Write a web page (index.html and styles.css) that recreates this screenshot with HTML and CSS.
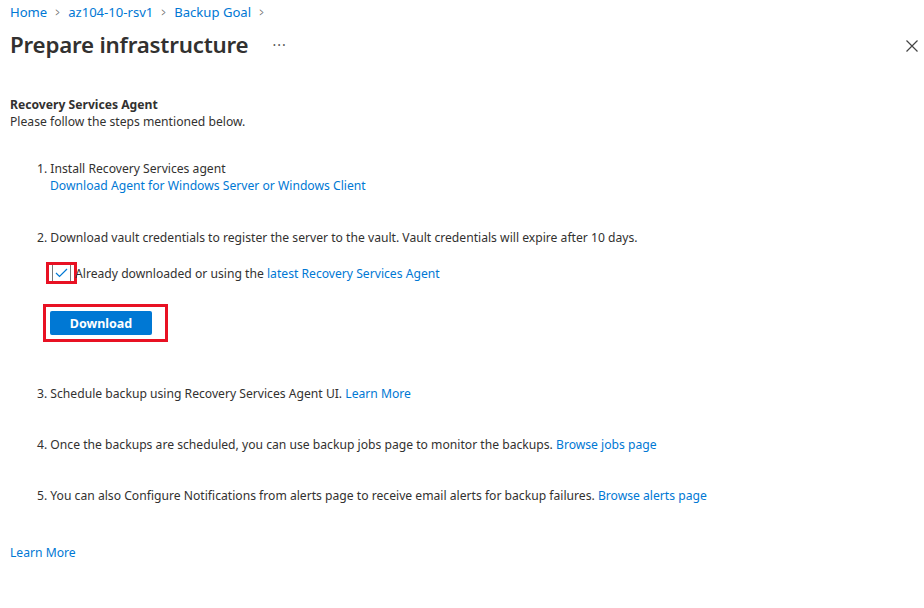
FILE: index.html
```html
<!DOCTYPE html>
<html>
<head>
<meta charset="utf-8">
<link rel="stylesheet" href="styles.css">
</head>
<body>
<div class="page">
  <nav class="crumbs">
    <a href="#">Home</a><span class="sep">&gt;</span>
    <a href="#">az104-10-rsv1</a><span class="sep">&gt;</span>
    <a href="#">Backup Goal</a><span class="sep">&gt;</span>
  </nav>
  <header class="head">
    <h1 class="title">Prepare infrastructure</h1>
    <span class="more">···</span>
    <span class="close"><svg width="12" height="12" viewBox="0 0 12 12"><path d="M0.5 0.5 L11.5 11.5 M11.5 0.5 L0.5 11.5" stroke="#444" stroke-width="1.2"/></svg></span>
  </header>
  <section class="intro">
    <div class="subhead">Recovery Services Agent</div>
    <div class="desc">Please follow the steps mentioned below.</div>
  </section>
  <ol class="steps">
    <li class="step s1">
      <div>1. Install Recovery Services agent</div>
      <div class="indent"><a href="#">Download Agent for Windows Server or Windows Client</a></div>
    </li>
    <li class="step s2">
      <div>2. Download vault credentials to register the server to the vault. Vault credentials will expire after 10 days.</div>
      <div class="check-row">
        <span class="hl hl-check"><span class="box"><svg width="13" height="10" viewBox="0 0 13 10"><path d="M1 5 L4.5 8.5 L12 1" fill="none" stroke="#0078d4" stroke-width="1.2"/></svg></span></span>
        <span class="check-label">Already downloaded or using the <a href="#">latest Recovery Services Agent</a></span>
      </div>
      <div class="hl hl-btn"><button class="btn">Download</button></div>
    </li>
    <li class="step s3">3. Schedule backup using Recovery Services Agent UI. <a href="#">Learn More</a></li>
    <li class="step s4">4. Once the backups are scheduled, you can use backup jobs page to monitor the backups. <a href="#">Browse jobs page</a></li>
    <li class="step s5">5. You can also Configure Notifications from alerts page to receive email alerts for backup failures. <a href="#">Browse alerts page</a></li>
  </ol>
  <div class="footer-link"><a href="#">Learn More</a></div>
</div>
</body>
</html>
```
FILE: styles.css
```css
html, body { margin: 0; padding: 0; background: #fff; }
body { font-family: "Noto Sans", "Open Sans", sans-serif; color: #323130; font-size: 12.15px; }
a { color: #0078d4; text-decoration: none; }
.page { padding: 0 10px; position: relative; }
.crumbs { height: 24px; display: flex; align-items: center; font-size: 13.1px; }
.crumbs a { color: #0078d4; }
.crumbs .sep { color: #666; margin: 0 7px; font-size: 12px; transform: scaleX(0.6); display: inline-block; }
.head { display: flex; align-items: center; height: 41px; }
.title { font-size: 22.3px; font-weight: 600; margin: 0; color: #323130; letter-spacing: -0.2px; }
.more { margin-left: 24px; color: #555; font-size: 14px; letter-spacing: 1px; }
.close { position: absolute; right: 6px; top: 39px; }
.intro { margin-top: 31px; }
.subhead { font-weight: 700; line-height: 17px; }
.desc { line-height: 17px; }
.steps { list-style: none; margin: 0; padding: 0 0 0 27px; }
.step { line-height: 17px; }
.s1 { margin-top: 30px; }
.indent { padding-left: 13px; }
.s2 { margin-top: 35px; }
.check-row { display: flex; align-items: center; margin-top: 16px; margin-left: 9px; }
.hl { border: 3px solid #e81123; box-sizing: border-box; }
.hl-check { width: 31px; height: 22px; display: flex; align-items: center; justify-content: center; }
.box { width: 17px; height: 16px; border-left: 1px solid #777; border-right: 1px solid #777; display: flex; align-items: center; justify-content: center; background: #fff; }
.check-label { margin-left: -2px; }
.hl-btn { width: 125px; height: 38px; margin-top: 20px; margin-left: 6px; display: flex; align-items: center; padding-left: 4px; }
.btn { width: 102px; height: 24px; background: #0078d4; color: #fff; border: none; border-radius: 2px; font-family: inherit; font-weight: 700; font-size: 12.5px; padding: 0; }
.s3 { margin-top: 43px; }
.s4 { margin-top: 34px; }
.s5 { margin-top: 34px; }
.footer-link { margin-top: 40px; line-height: 17px; }
```
